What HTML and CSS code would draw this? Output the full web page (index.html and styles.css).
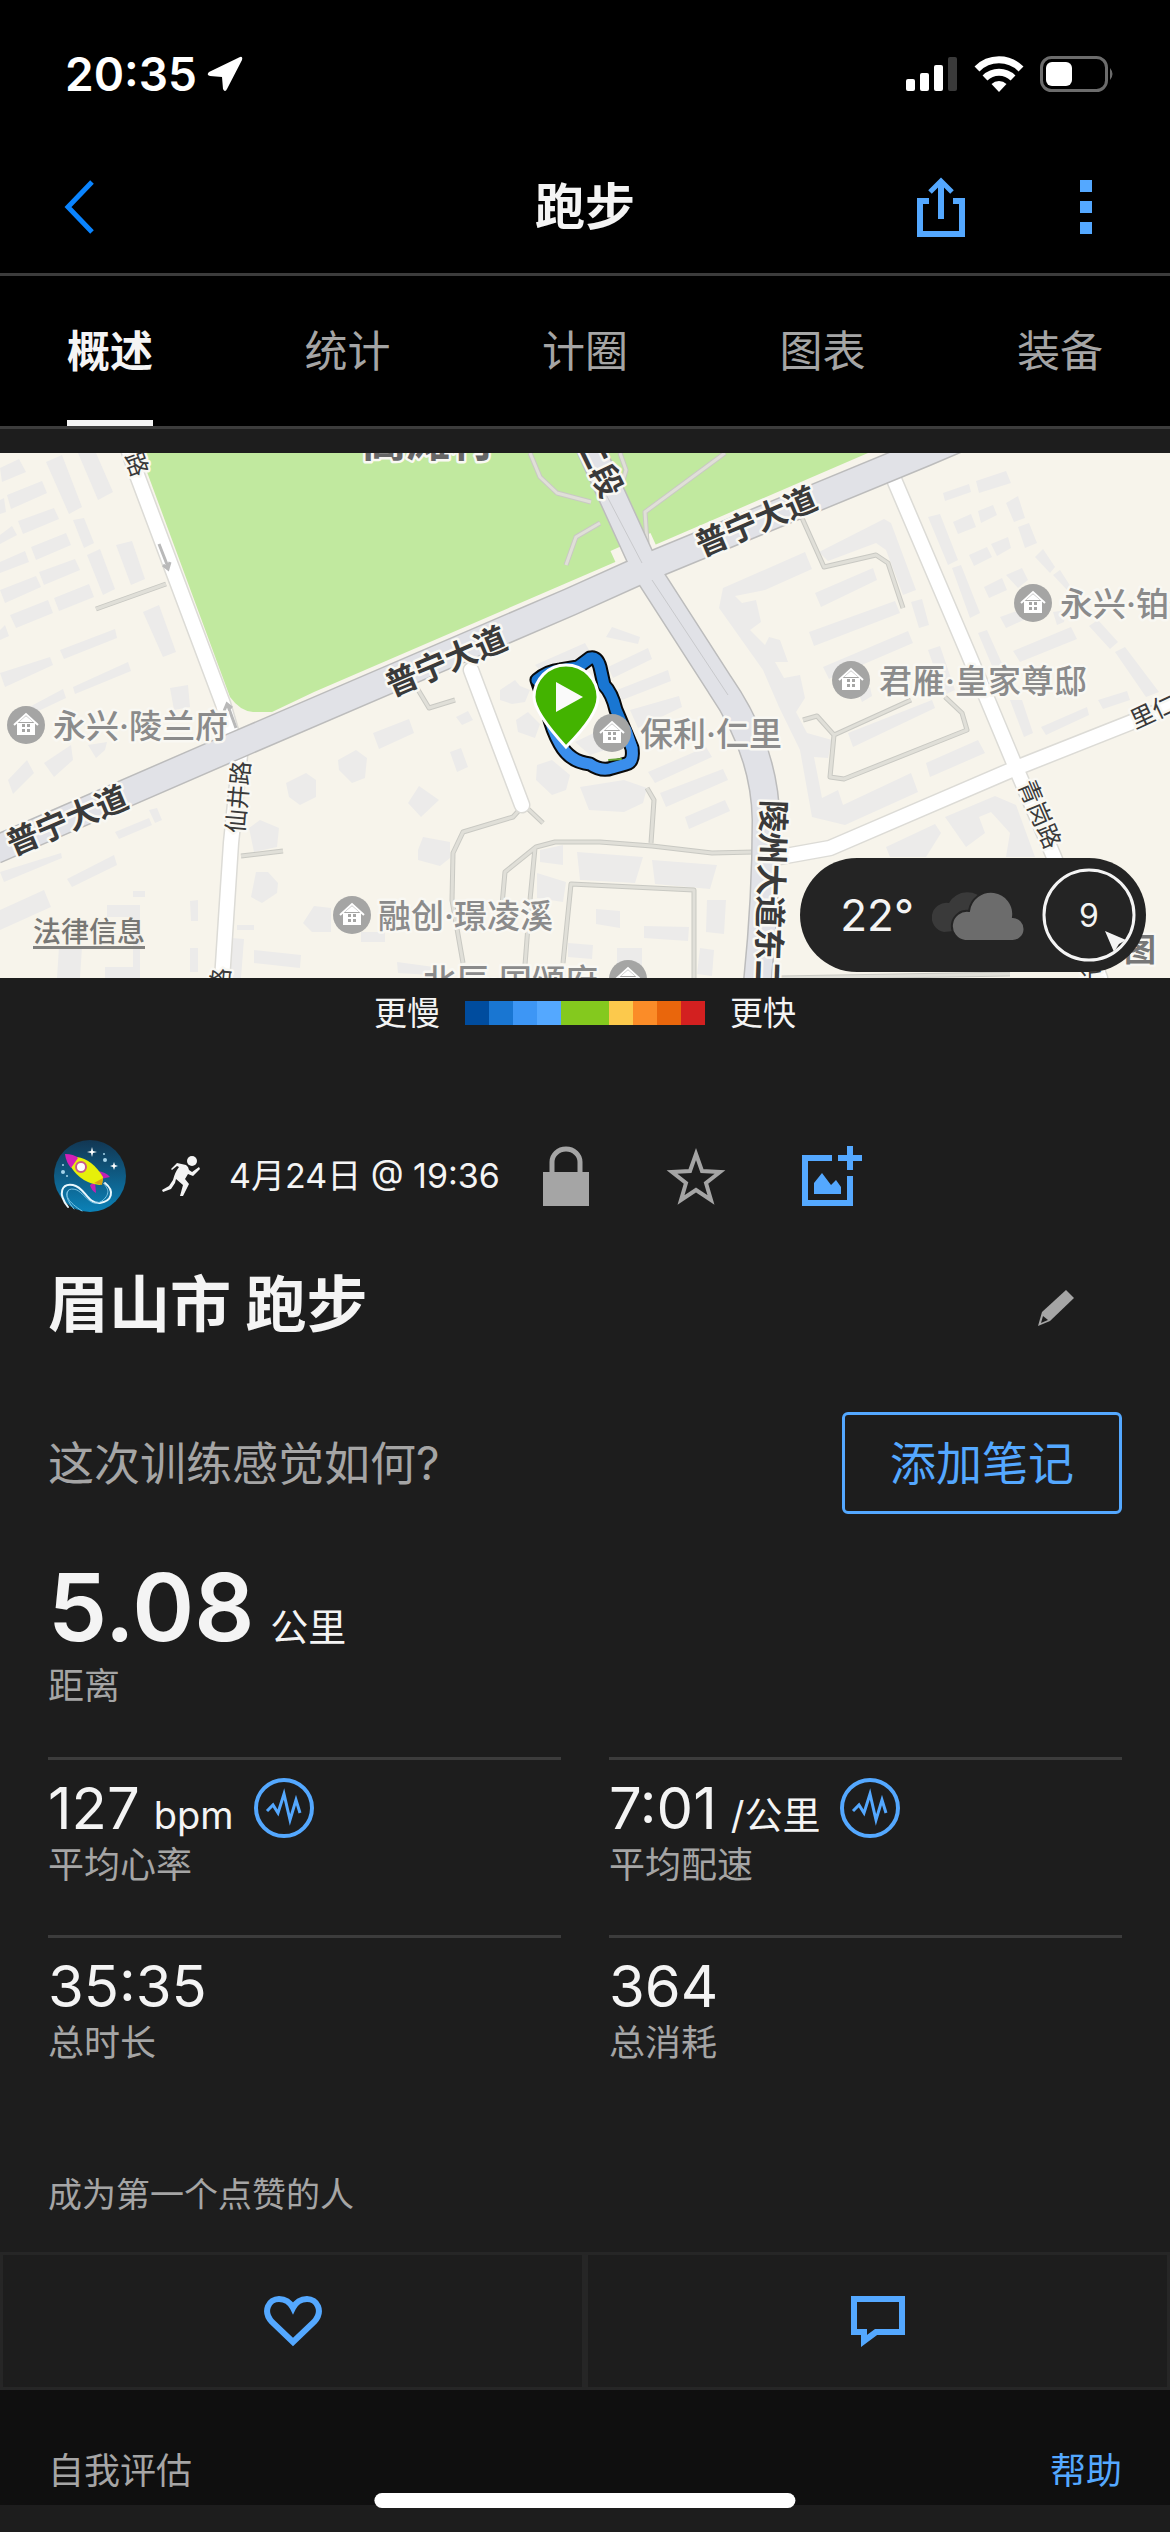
FILE: index.html
```html
<!DOCTYPE html>
<html lang="zh-CN">
<head>
    <meta charset="UTF-8">
    <meta name="viewport" content="width=device-width, initial-scale=1.0">
    <title>跑步</title>
    <link rel="stylesheet" href="styles.css">
</head>
<body>

    <header>
        <!-- Status bar -->
        <div class="status-bar">
            <div class="status-time">
                <span>20:35</span>
                <svg width="36" height="36" viewBox="0 0 36 36"><path d="M33 1 2 16Q-1 19 3 20L15 21 16 33Q18 37 20 33L35 4Q36 0 33 1Z" fill="#fff"/></svg>
            </div>
            <div class="status-icons">
                <svg width="52" height="36" viewBox="0 0 52 36" fill="#fff">
                    <rect y="23" width="9" height="12" rx="2"/>
                    <rect x="14" y="17" width="9" height="18" rx="2"/>
                    <rect x="28" y="9" width="9" height="26" rx="2"/>
                    <rect x="42" y="1" width="9" height="34" rx="2" fill="#3a3a3a"/>
                </svg>
                <svg width="50" height="36" viewBox="0 0 50 36" fill="none" stroke="#fff" stroke-width="7">
                    <path d="M3 13a31 31 0 0 1 44 0"/>
                    <path d="M11 22a20 20 0 0 1 28 0"/>
                    <path d="M25 36 17.500 28a11 11 0 0 1 15 0z" fill="#fff" stroke="none"/>
                </svg>
                <svg width="76" height="36" viewBox="0 0 76 36">
                    <rect x="1.500" y="1.500" width="65" height="33" rx="10" fill="none" stroke="#6c6c6c" stroke-width="3"/>
                    <rect x="6" y="6" width="26" height="24" rx="6" fill="#fff"/>
                    <path d="M70 12q5 6 0 12z" fill="#6c6c6c"/>
                </svg>
            </div>
        </div>

        <!-- Title bar -->
        <div class="title-bar">
            <button type="button" class="icon-button" aria-label="返回">
                <svg width="32" height="54" viewBox="0 0 32 54"><path d="M28 2 4 27l24 25" fill="none" stroke="#0a84ff" stroke-width="5"/></svg>
            </button>
            <h1>跑步</h1>
            <div class="title-actions">
                <button type="button" class="icon-button" aria-label="分享">
                    <svg width="50" height="60" viewBox="0 0 50 60" fill="none" stroke="#54a8ff" stroke-width="6">
                        <path d="M13 24H4v33h42V24h-9"/>
                        <path d="M25 42V5"/>
                        <path d="M14 15 25 4l11 11" stroke-width="5"/>
                    </svg>
                </button>
                <button type="button" class="icon-button" aria-label="更多">
                    <svg width="12" height="54" viewBox="0 0 12 54" fill="#54a8ff"><path d="M0 0h12v12H0zM0 21h12v12H0zM0 42h12v12H0z"/></svg>
                </button>
            </div>
        </div>

        <nav class="tabs">
            <a href="#overview" class="active">概述</a>
            <a href="#stats">统计</a>
            <a href="#laps">计圈</a>
            <a href="#charts">图表</a>
            <a href="#gear">装备</a>
        </nav>
    </header>

    <main id="overview">
        <!-- Route map -->
        <div class="map">
            <svg class="map-canvas" viewBox="0 453 1170 525">
                <defs>
                    <g id="home">
                        <circle r="19" fill="#a5a5a4"/>
                        <path d="M-9-2h18V10H-9z" fill="#fff"/>
                        <path d="M-12 0 0-11 12 0" fill="none" stroke="#fff" stroke-width="2"/>
                        <path d="M-7-3 0-9 7-3z" fill="#fff"/>
                        <path d="M-4-1h3v3h-3zM1-1h3v3H1zM-4 4h3v3h-3zM1 4h3v3H1z" fill="#a5a5a4"/>
                    </g>
                </defs>
                <rect y="453" width="1170" height="525" fill="#f7f4eb"/>

                <!-- park -->
                <path d="M140 453 230 697Q240 711 253 712H272L314 692 868 453z" fill="#c1e99f"/>
                <path d="M615 561 655 543M230 748 570 595 660 556 905 452" stroke="#f7f4eb" stroke-width="22" fill="none"/>

                <!-- buildings -->
                <path class="building" d="M0 468 19 459 26 472 2 482zM7 495 42 481 47 493 11 509zM18 521 54 508 59 519 23 534zM31 547 66 533 71 545 36 560zM39 572 75 559 80 570 44 585zM46 462 62 455 82 507 69 514zM78 453H96L113 492 98 500zM73 520 84 518 94 543 84 548zM87 555 100 549 115 589 103 595zM116 545 132 541 145 579 131 585zM0 535 12 526 17 535 0 544zM0 562 25 551 29 562 0 573zM0 590 36 576 41 587 5 603zM10 615 48 600 53 613 16 628zM54 598 89 584 94 597 59 611zM60 650 115 629 117 638 64 659zM0 673 50 657 53 665 5 687zM73 687 128 662 131 671 75 694zM143 612 159 605 176 652 163 657zM20 712 63 689 66 698 30 715zM170 688 188 685 190 707 174 710z"/>
                <path class="building" d="M0 500 4 498 6 512 0 514zM0 630 5 625 9 636 0 640zM8 780 27 760 34 773 13 794zM44 763 71 745 73 760 54 777zM88 745 107 742 105 750 96 758zM115 832 149 818 152 825 119 839zM149 810 157 808 162 820 155 823zM67 879 114 855 117 865 72 887zM0 910 44 890 51 907 0 930zM0 872 61 853 62 858 4 882zM249 828 260 820 279 828 277 847 254 852zM256 872H268L278 883 277 893 262 903 251 897zM286 783 306 773 316 780V797L300 805 289 797zM338 760 356 750 367 758 365 778 352 783 339 770zM373 733 409 719 414 733 379 749zM450 752 461 748 468 767 457 772zM408 803 419 786 439 800 421 817zM456 717 468 711 473 720 462 725zM418 850 423 837 450 842V858L440 866 418 860z"/>
                <path class="building" d="M303 923 314 906 331 908V932H312zM254 950 301 955 300 968 254 963zM232 938 244 939 241 978H230zM59 947H82L80 978H57zM105 967H140V978H105zM107 905H140V917H107zM133 891H145V897H133zM133 917H140V978H133zM190 901 198 900V921H191zM190 948H198V972H190zM237 925H254V930H237zM397 962 434 967 431 975 398 973zM361 932H385V942H361zM568 943 593 945 592 959 568 957zM540 850 563 845V865L540 862zM577 852 643 857 635 883 580 880zM652 860 717 865 710 889 655 884zM537 873 566 882 563 902 537 898zM707 900H726L724 934 706 932zM644 926 689 927 688 941 644 938zM596 909 620 911V928L596 924zM700 948 714 950 712 976 697 974zM617 948H642V965H617z"/>
                <path class="building" d="M500 690 515 680 520 686 530 690 525 702 512 704 500 700zM516 720 528 712 540 724 535 738 518 732zM537 765 552 760 570 775 566 790 552 795 536 780zM580 787 624 780 647 788 643 803 624 812 589 810zM535 665 585 643 592 655 545 675zM606 637 612 627 640 637 638 644zM608 667 648 648 652 659 613 678zM617 690 668 670 671 681 622 700zM630 710 679 696 682 707 638 728zM575 742 600 730 620 745 590 755zM648 772 706 747 712 757 655 783zM660 793 723 769 728 780 666 807zM685 817 725 800 730 811 689 829z"/>
                <path class="building" d="M819 552 884 519 891 523 916 590 903 595 886 550 876 543 828 561zM723 588 805 552 812 569 765 590 735 596 742 603 756 600 761 622 750 630 765 645 769 637 780 640 788 662 775 662 784 678 800 675 805 698 796 712 807 733 832 740 828 758 814 757 822 798 838 790 843 805 911 773 918 792 845 825 812 817 800 750 779 707 763 670 719 608zM815 593 873 568 877 580 821 607zM809 632 895 601 900 613 814 646zM823 667 908 631 913 643 829 679zM848 733 932 700 935 708 853 747zM926 763 978 740 985 753 930 777zM858 692 870 687 872 696 862 702zM928 650 940 646 955 690 944 695z"/>
                <path class="building" d="M928 517 940 514 958 560 948 565zM952 568 961 565 980 613 970 618zM976 481 1006 471 1011 483 979 493zM943 493 969 484 971 492 945 501zM953 522 971 514 976 527 958 534zM978 511 993 505 997 515 981 523zM1006 503 1018 496 1025 518 1014 522zM1018 527 1029 523 1037 543 1025 548zM969 555 987 547 992 557 974 566zM991 544 1008 537 1011 548 997 556zM984 587 1002 578 1007 590 989 598zM1006 575 1022 568 1028 580 1018 588zM1035 557 1043 549 1055 567 1050 573zM1053 575 1060 570 1071 587 1067 590zM911 602 922 599 929 625 919 628zM1013 651 1071 627 1077 639 1020 662zM1089 626 1098 620 1118 642 1110 649zM1115 652 1125 647 1159 692 1146 697zM978 633 987 630 1004 668 995 673zM1098 700 1127 691 1130 700 1103 709zM1000 617 1025 608 1028 618 1006 628zM1053 612 1066 610 1064 622 1057 625zM1041 727 1087 707 1089 715 1046 735zM1010 700H1022L1033 733 1024 737zM945 817 995 796 1016 805 1035 857H1006L1010 833 991 812 979 817 985 833 966 847zM886 847 935 824 941 833 926 857H890z"/>

                <!-- lanes -->
                <g class="lane-edge">
                    <path id="lanes" d="M96 609 166 584M530 453 540 477 557 493 591 502M600 523 576 537 566 565M725 453 645 512 647 543M620 453 626 470 622 484M802 518 824 567 876 555 888 563 903 608M522 807 513 817 463 832 453 853 452 900 463 963M526 807 543 823M502 905 505 872 536 847 555 842H600L652 846 712 853 754 852M535 848 530 900 525 965M563 963 571 884 694 890V978M647 788 654 800 651 843M241 856 283 851M417 688 429 708 455 700M803 720 817 716 834 735 830 777 844 779 967 730 962 713 945 697M834 735 911 700M780 978 1010 974"/>
                </g>
                <use href="#lanes" class="lane"/>

                <!-- minor roads -->
                <g class="minor-edge">
                    <path d="M125 440 137 475 223 704 235 745M240 755 231 843 222 980M893 477 968 653 1016 768 1054 857 1100 978M780 857 830 848 1016 768 1175 705M471 670 522 805"/>
                </g>
                <path class="minor" d="M125 440 137 475 223 704 235 745M240 755 231 843 222 980M893 477 968 653 1016 768 1054 857 1100 978M780 857 830 848 1016 768 1175 705M471 670 522 805"/>

                <!-- main roads -->
                <g class="main-edge">
                    <path d="M-5 850 230 748 570 602 650 566 924 453 990 425M588 443 646 570 720 685Q765 750 766 820 766 900 757 985"/>
                </g>
                <path class="main-road" d="M-5 850 230 748 570 602 650 566 924 453 990 425M588 443 646 570 720 685Q765 750 766 820 766 900 757 985"/>
                <path d="M588 460 642 563M652 580 728 695" stroke="#c8c9cc" fill="none"/>
                <path d="M159 544 168 567M163 565l5 4 2-7M236 728 228 706M224 711l3-7 5 4" stroke="#b9b9b9" stroke-width="3" fill="none"/>

                <!-- road names -->
                <g class="road-name">
                    <text transform="translate(446 661) rotate(-23)" dy="12">普宁大道</text>
                    <text transform="translate(756 521) rotate(-23)" dy="12">普宁大道</text>
                    <text transform="translate(67 820) rotate(-23)" dy="12">普宁大道</text>
                    <text transform="translate(600 466) rotate(64)" dy="12">二段</text>
                    <text transform="translate(771 896) rotate(92)" dy="12">陵州大道东二</text>
                </g>
                <g class="street-name">
                    <text transform="translate(137 464) rotate(70)" dy="9">路</text>
                    <text transform="translate(238 797) rotate(-85)" dy="9">仙井路</text>
                    <text transform="translate(220 980) rotate(-85)" dy="9">路</text>
                    <text transform="translate(1040 814) rotate(67)" dy="9">青岗路</text>
                    <text transform="translate(1164 706) rotate(-25)" dy="9">里仁路</text>
                    <text transform="translate(1091 982)" dy="9">近</text>
                </g>
                <text class="area-name" x="428" y="457">高滩村</text>

                <!-- recorded track -->
                <g fill="none" stroke-linejoin="round" stroke-linecap="round">
                    <path d="M537 680Q548 671 560 670L578 667 590 658Q597 656 600 667L604 685Q612 693 616 710L632 748Q634 762 626 764L612 768Q602 772 590 764 570 762 560 744 552 730 548 712z" stroke="#0a0a0a" stroke-width="15"/>
                    <path d="M537 680Q548 671 560 670L578 667 590 658Q597 656 600 667L604 685Q612 693 616 710L632 748" stroke="#1976d2" stroke-width="11"/>
                    <path d="M626 730 632 748Q634 762 626 764L612 768Q602 772 590 764 570 762 560 744 552 730 548 712" stroke="#3a8eec" stroke-width="11"/>
                    <path d="M609 760 621 759" stroke="#6aa83a" stroke-width="2"/>
                </g>
                <path d="M566 747Q534 712 534 697A32 32 0 0 1 598 697Q598 715 566 747z" fill="#43b300" stroke="#fff" stroke-width="3"/>
                <path d="M556 682 583 697 556 712z" fill="#fafafa"/>

                <!-- places -->
                <use href="#home" x="26" y="725"/>
                <use href="#home" x="352" y="915"/>
                <use href="#home" x="612" y="733"/>
                <use href="#home" x="1033" y="603"/>
                <use href="#home" x="851" y="680"/>
                <use href="#home" x="628" y="979"/>
                <g class="place-name">
                    <text x="53" y="738">永兴·陵兰府</text>
                    <text x="378" y="928">融创·璟凌溪</text>
                    <text x="640" y="746">保利·仁里</text>
                    <text x="1060" y="616">永兴·铂悦</text>
                    <text x="879" y="693">君雁·皇家尊邸</text>
                    <text x="423" y="993">北辰·国颂府</text>
                </g>
                <text class="map-brand" x="1140" y="961">图</text>
            </svg>

            <a href="#legal" class="legal">法律信息</a>

            <div class="weather">
                <span class="temperature">22°</span>
                <svg width="92" height="52" viewBox="0 0 92 52">
                    <path d="M12 43A13 13 0 0 1 17 14 20 18 0 0 1 53 13L40 40z" fill="#3a3a3a"/>
                    <path d="M33 52A15 15 0 1 1 37 22 22 22 0 0 1 81 28 12 12 0 0 1 80 52z" fill="#6c6c6c" stroke="#242424" stroke-width="2"/>
                </svg>
                <div class="wind">
                    <span>9</span>
                    <svg viewBox="0 0 94 94">
                        <circle cx="47" cy="47" r="45" fill="none" stroke="#f4f4f4" stroke-width="3"/>
                        <path d="M63 63 84 72 77 76 72 84z" fill="#f4f4f4"/>
                    </svg>
                </div>
            </div>
        </div>

        <div class="legend">
            <span>更慢</span>
            <div class="legend-bar">
                <i class="pace-1"></i><i class="pace-2"></i><i class="pace-3"></i><i class="pace-4"></i><i class="pace-5"></i><i class="pace-5"></i><i class="pace-6"></i><i class="pace-7"></i><i class="pace-8"></i><i class="pace-9"></i>
            </div>
            <span>更快</span>
        </div>

        <!-- Activity details -->
        <div class="meta">
            <svg class="avatar" width="72" height="72" viewBox="0 0 72 72">
                <defs>
                    <linearGradient id="sky" x1="0" y1="0" x2="0" y2="1">
                        <stop offset="0" stop-color="#123652"/>
                        <stop offset="1" stop-color="#0b82b8"/>
                    </linearGradient>
                </defs>
                <circle cx="36" cy="36" r="36" fill="url(#sky)"/>
                <g fill="none" stroke="#e9f7fd" stroke-linecap="round">
                    <path d="M14 67C3 53 8 43 19 45 31 47 33 64 46 63 58 61 61 51 51 43" stroke-width="2"/>
                    <path d="M20 69C8 55 12 46 23 50 33 56 37 68 48 61 58 53 53 47 49 43M28 71C14 62 10 55 15 50" stroke="#7cc4e4"/>
                </g>
                <path d="M43 31Q52 32 56 37L47 39zM36 45Q37 50 42 53L41 42z" fill="#c020b4"/>
                <path d="M23 17Q38 19 49 37 49 43 46 45 27 43 17 27z" fill="#e6f00a"/>
                <path d="M49 38 48 45 40 43z" fill="#d9a514"/>
                <path d="M11 14Q20 14 24 18L17 28Q12 22 11 14z" fill="#d31fb8"/>
                <circle cx="27" cy="27" r="5" fill="#fff" stroke="#c9588a" stroke-width="2"/>
                <path d="M38 7l1 4 4 1-4 1-1 4-1-4-4-1 4-1zM60 22l1 3 3 1-3 1-1 3-1-3-3-1 3-1z" fill="#fff"/>
                <g fill="#a6d4ea"><circle cx="51" cy="20" r="2"/><circle cx="50" cy="14" r="1"/><circle cx="9" cy="32" r="2"/><circle cx="9" cy="25" r="1"/><circle cx="13" cy="36" r="1"/></g>
            </svg>
            <svg class="runner" width="38" height="40" viewBox="0 0 38 40">
                <circle cx="30" cy="5" r="5" fill="#f4f4f4"/>
                <path d="M15 7 24 9Q27 11 27 14L30 16 37 11 38 13 31 20 26 18 23 23 27 28 21 40H18L21 29 14 23 13 27 9 33 1 36 0 34 7 30 11 24Q13 16 17 11L15 10 10 14 9 13z" fill="#f4f4f4"/>
            </svg>
            <time>4月24日 @ 19:36</time>
            <div class="meta-actions">
                <button type="button" class="icon-button" aria-label="隐私">
                    <svg width="48" height="60" viewBox="0 0 48 60"><path d="M10 28V16a14 13 0 0 1 28 0V28" fill="none" stroke="#a5a5a5" stroke-width="5"/><path d="M1 26h46v34H1z" fill="#a5a5a5"/></svg>
                </button>
                <button type="button" class="icon-button" aria-label="收藏">
                    <svg width="60" height="60" viewBox="0 0 60 60"><path d="M30 8 36 25 54 26 40 37 45 54 30 44 15 54 20 37 6 26 24 25z" fill="none" stroke="#a5a5a5" stroke-width="4"/></svg>
                </button>
                <button type="button" class="icon-button" aria-label="添加照片">
                    <svg width="62" height="60" viewBox="0 0 62 60">
                        <path d="M30 12H3v45h45V30" fill="none" stroke="#54a8ff" stroke-width="6"/>
                        <path d="M36 12h24M48 0v24" fill="none" stroke="#54a8ff" stroke-width="6"/>
                        <path d="M12 48V37l8-10 9 12 5-5 5 7v7z" fill="#54a8ff"/>
                    </svg>
                </button>
            </div>
        </div>

        <div class="name-row">
            <h2>眉山市 跑步</h2>
            <button type="button" class="icon-button" aria-label="编辑">
                <svg width="38" height="44" viewBox="0 -6 38 44"><path d="M29 1 37 9 13 32 1 37 5 23z" fill="#a5a5a5"/><path d="M6 27 11 31 4 34z" fill="#1d1d1d"/></svg>
            </button>
        </div>

        <div class="note-row">
            <p>这次训练感觉如何?</p>
            <button type="button" class="note-button">添加笔记</button>
        </div>

        <div class="distance">
            <div class="distance-value"><strong>5.08</strong><span>公里</span></div>
            <div class="label">距离</div>
        </div>

        <div class="stats" id="stats">
            <div class="stat">
                <div class="stat-value">
                    <b>127</b><span>bpm</span>
                    <button type="button" class="icon-button" aria-label="心率图表">
                        <svg width="60" height="60" viewBox="0 0 60 60" fill="none" stroke="#54a8ff"><circle cx="30" cy="30" r="28" stroke-width="4"/><path d="M13 33 19 27 24 35 30 16 36 42 42 22 46 35" stroke-width="3"/></svg>
                    </button>
                </div>
                <div class="label">平均心率</div>
            </div>
            <div class="stat">
                <div class="stat-value">
                    <b>7:01</b><span>/公里</span>
                    <button type="button" class="icon-button" aria-label="配速图表">
                        <svg width="60" height="60" viewBox="0 0 60 60" fill="none" stroke="#54a8ff"><circle cx="30" cy="30" r="28" stroke-width="4"/><path d="M13 33 19 27 24 35 30 16 36 42 42 22 46 35" stroke-width="3"/></svg>
                    </button>
                </div>
                <div class="label">平均配速</div>
            </div>
            <div class="stat">
                <div class="stat-value"><b>35:35</b></div>
                <div class="label">总时长</div>
            </div>
            <div class="stat">
                <div class="stat-value"><b>364</b></div>
                <div class="label">总消耗</div>
            </div>
        </div>

        <p class="likes">成为第一个点赞的人</p>

        <div class="social">
            <button type="button" aria-label="点赞">
                <svg width="60" height="52" viewBox="0 0 60 52"><path d="M30 47 9 27C-1 16 6 4 16 4 24 4 28 9 30 13 32 9 36 4 44 4 54 4 61 16 51 27z" fill="none" stroke="#54a8ff" stroke-width="6"/></svg>
            </button>
            <button type="button" aria-label="评论">
                <svg width="54" height="52" viewBox="0 0 54 52"><path d="M3 4h48v33H25L13 46V37H3z" fill="none" stroke="#54a8ff" stroke-width="6"/></svg>
            </button>
        </div>

        <div class="self-review">
            <span>自我评估</span>
            <a href="#help">帮助</a>
        </div>
    </main>

    <div class="home-indicator"></div>

</body>
</html>
```

FILE: styles.css
```css
/* Basic Styles */
* {
    box-sizing: border-box;
}
body {
    font-family: Inter, "Noto Sans CJK SC", sans-serif;
    background-color: #1d1d1d;
    color: #f4f4f4;
    margin: 0;
}
h1, h2, p {
    margin: 0;
}
a {
    text-decoration: none;
}
svg {
    display: block;
    flex: none;
}
button {
    font-family: inherit;
    background: none;
    border: none;
    padding: 0;
    cursor: pointer;
}
.icon-button {
    display: flex;
}

/* Header */
header {
    background-color: #000;
    border-bottom: 3px solid #3c3c3c;
    margin-bottom: 24px;
}
.status-bar {
    display: flex;
    justify-content: space-between;
    align-items: center;
    padding: 49px 54px 42px 65px;
    font-size: 46px;
    font-weight: 600;
    line-height: 50px;
    color: #fff;
}
.status-time {
    display: flex;
    align-items: center;
    gap: 10px;
}
.status-icons {
    display: flex;
    gap: 16px;
}
.title-bar {
    display: grid;
    grid-template-columns: 1fr auto 1fr;
    align-items: center;
    height: 135px;
    padding: 0 64px;
    border-bottom: 3px solid #3c3c3c;
}
.title-bar h1 {
    font-size: 50px;
    line-height: 72px;
}
.title-actions {
    display: flex;
    justify-content: flex-end;
    align-items: center;
    gap: 114px;
    padding-right: 14px;
}
.tabs {
    display: flex;
    justify-content: space-between;
    padding: 0 67px;
}
.tabs a {
    padding: 45px 0 39px;
    border-bottom: 6px solid transparent;
    font-size: 43px;
    line-height: 60px;
    color: #a5a5a5;
}
.tabs .active {
    border-color: #f4f4f4;
    font-weight: 700;
    color: #f4f4f4;
}

/* Map */
.map {
    position: relative;
}
.map-canvas {
    width: 100%;
    height: auto;
}
.map text {
    paint-order: stroke;
    stroke: #f9f8f3;
    stroke-width: 5px;
    stroke-linejoin: round;
}
.building {
    fill: #ecebea;
}
.lane-edge, .lane, .minor-edge, .minor, .main-edge, .main-road {
    fill: none;
    stroke-linejoin: round;
}
.lane-edge {
    stroke: #c9c9c3;
    stroke-width: 5px;
}
.lane {
    stroke: #e0dfd8;
    stroke-width: 3px;
}
.minor-edge {
    stroke: #dcdbd6;
    stroke-width: 17px;
    stroke-linecap: round;
}
.minor {
    stroke: #fff;
    stroke-width: 14px;
    stroke-linecap: round;
}
.main-edge {
    stroke: #bcbcbc;
    stroke-width: 29px;
}
.main-road {
    stroke: #e1e2e7;
    stroke-width: 26px;
}
.road-name {
    font-size: 32px;
    font-weight: 700;
    text-anchor: middle;
    fill: #3a3a3a;
}
.street-name {
    font-size: 24px;
    text-anchor: middle;
    fill: #3a3a3a;
}
.area-name {
    font-size: 44px;
    font-weight: 700;
    text-anchor: middle;
    fill: #666;
}
.place-name {
    font-size: 33px;
    font-weight: 500;
    fill: #8b8b8b;
}
.map-brand {
    font-size: 32px;
    font-weight: 700;
    text-anchor: middle;
    fill: #777;
}
.legal {
    position: absolute;
    left: 33px;
    bottom: 29px;
    border-bottom: 3px solid #81817e;
    font-size: 28px;
    font-weight: 500;
    line-height: 28px;
    color: #777774;
}
.weather {
    position: absolute;
    right: 24px;
    bottom: 6px;
    display: flex;
    align-items: center;
    gap: 18px;
    height: 114px;
    padding: 0 10px 0 40px;
    border-radius: 57px;
    background-color: #242424;
}
.temperature {
    font-size: 44px;
}
.wind {
    position: relative;
    display: flex;
    align-items: center;
    justify-content: center;
    width: 94px;
    height: 94px;
    font-size: 32px;
}
.wind svg {
    position: absolute;
    inset: 0;
}

/* Pace legend */
.legend {
    display: flex;
    justify-content: center;
    align-items: center;
    gap: 25px;
    padding-top: 11px;
    margin-bottom: 103px;
    font-size: 33px;
    line-height: 48px;
}
.legend-bar {
    display: flex;
}
.legend-bar i {
    width: 24px;
    height: 24px;
}
.pace-1 { background-color: #004c9e; }
.pace-2 { background-color: #1976d2; }
.pace-3 { background-color: #3d96f5; }
.pace-4 { background-color: #54a8ff; }
.pace-5 { background-color: #84c91e; }
.pace-6 { background-color: #fcc94c; }
.pace-7 { background-color: #fb8c28; }
.pace-8 { background-color: #e9660c; }
.pace-9 { background-color: #d32020; }

/* Activity details */
.meta {
    display: flex;
    align-items: center;
    padding-left: 54px;
}
.runner {
    margin: 0 29px 0 36px;
}
.meta time {
    font-size: 34px;
    line-height: 48px;
}
.meta-actions {
    display: flex;
    align-items: center;
    gap: 76px;
    margin-left: 42px;
}
.name-row {
    display: flex;
    justify-content: space-between;
    align-items: center;
    padding: 53px 95px 67px 48px;
}
.name-row h2 {
    font-size: 61px;
    line-height: 80px;
}
.note-row {
    display: flex;
    justify-content: space-between;
    align-items: center;
    padding: 0 48px;
}
.note-row p {
    font-size: 46px;
    line-height: 60px;
    color: #a5a5a5;
}
.note-button {
    height: 102px;
    padding: 0 45px;
    border: 3px solid #54a8ff;
    border-radius: 6px;
    font-size: 46px;
    line-height: 60px;
    color: #54a8ff;
}
.label {
    font-size: 36px;
    line-height: 48px;
    color: #a5a5a5;
}
.distance {
    padding: 43px 48px 47px;
}
.distance-value {
    display: flex;
    align-items: baseline;
    gap: 16px;
    margin-bottom: 5px;
    font-size: 38px;
    line-height: 48px;
}
.distance-value strong {
    font-size: 94px;
    font-weight: 600;
    line-height: 100px;
}
.stats {
    display: grid;
    grid-template-columns: 1fr 1fr;
    column-gap: 48px;
    padding: 0 48px;
}
.stat {
    padding: 18px 0 46px;
    border-top: 3px solid #3c3c3c;
}
.stat-value {
    display: flex;
    align-items: baseline;
    height: 60px;
    margin-bottom: 3px;
    font-size: 38px;
    line-height: 48px;
}
.stat-value b {
    font-size: 58px;
    font-weight: 400;
    line-height: 60px;
}
.stat-value span {
    margin: 0 20px 0 14px;
}
.stat-value button {
    align-self: center;
}
.likes {
    padding: 58px 48px 33px;
    font-size: 34px;
    line-height: 48px;
    color: #a5a5a5;
}
.social {
    display: grid;
    grid-template-columns: 1fr 1fr;
}
.social button {
    display: flex;
    justify-content: center;
    align-items: center;
    height: 138px;
    border: 3px solid #262626;
}
.self-review {
    display: flex;
    justify-content: space-between;
    padding: 57px 48px 10px;
    background-color: #0f0f0f;
    font-size: 36px;
    line-height: 48px;
    color: #a5a5a5;
}
.self-review a {
    color: #54a8ff;
}
.home-indicator {
    position: fixed;
    left: 50%;
    bottom: 24px;
    width: 36%;
    height: 15px;
    border-radius: 8px;
    background-color: #fff;
    transform: translateX(-50%);
}
```
